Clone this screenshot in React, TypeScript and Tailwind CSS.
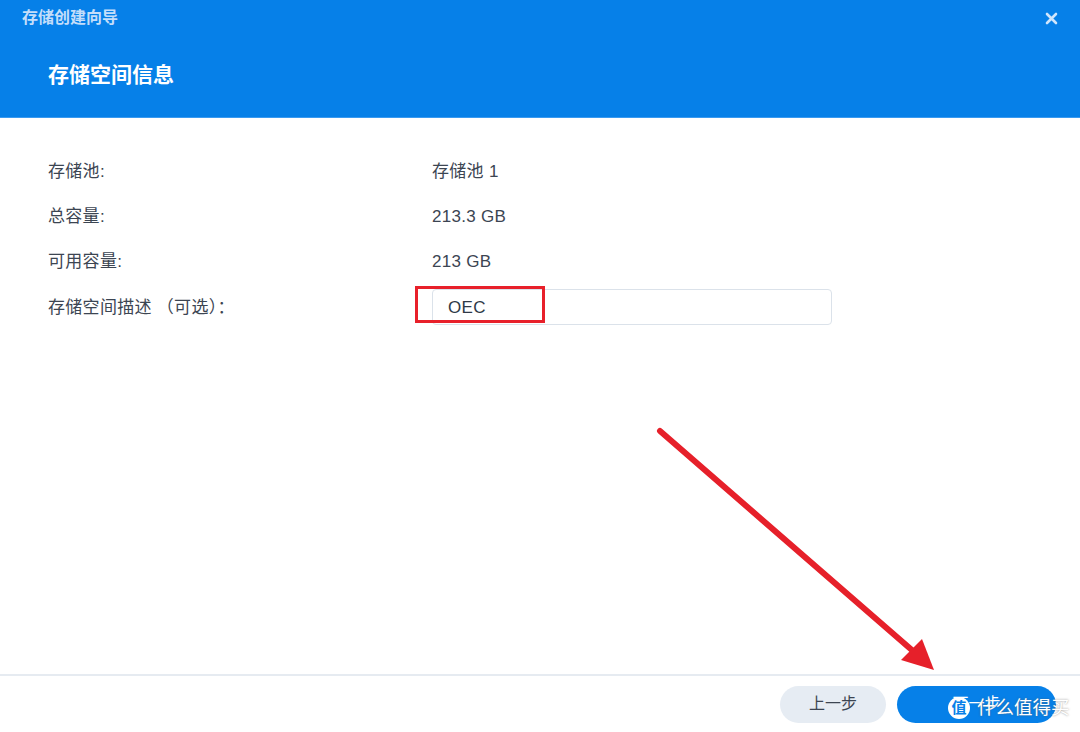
const font = { fontFamily: '"Liberation Sans", "Noto Sans CJK SC", sans-serif' };

const rows = [
  { label: "存储池:", value: "存储池 1" },
  { label: "总容量:", value: "213.3 GB" },
  { label: "可用容量:", value: "213 GB" },
];

export default function App() {
  return (
    <div className="relative w-[1080px] h-[732px] bg-white flex flex-col overflow-hidden" style={font}>
      {/* header */}
      <div className="h-[118px] bg-[#0680e8] flex flex-col border-b border-[#3a9af0]">
        <div className="flex items-center justify-between h-[36px] pl-[22px] pr-[22px]">
          <span className="text-[16px] font-bold text-[#c4defa]">存储创建向导</span>
          <svg width="13" height="13" viewBox="0 0 13 13">
            <path d="M2 2 L11 11 M11 2 L2 11" stroke="#cfe5fc" strokeWidth="2.6" strokeLinecap="round" />
          </svg>
        </div>
        <div className="pl-[48px] pt-[24px] text-[21px] leading-[30px] font-bold text-white">存储空间信息</div>
      </div>

      {/* body */}
      <div className="flex-1 pt-[31px] px-[48px]">
        {rows.map((r) => (
          <div key={r.label} className="flex items-center h-[45.3px] text-[17px] tracking-[0.3px] text-[#3c4552]">
            <div className="w-[384px]">{r.label}</div>
            <div>{r.value}</div>
          </div>
        ))}
        <div className="flex items-center h-[45px] text-[17px] tracking-[0.3px] text-[#3c4552]">
          <div className="w-[384px]">存储空间描述 （可选）：</div>
          <div className="relative">
            <div className="w-[400px] h-[36px] border border-[#dbe2ea] rounded-[4px] flex items-center pl-[15px] text-[17px] text-[#2f3947]">
              OEC
            </div>
            <div className="absolute left-[-17px] top-[-3px] w-[130px] h-[37px] border-[3px] border-[#e8202a]"></div>
          </div>
        </div>
      </div>

      {/* footer */}
      <div className="h-[58px] border-t-2 border-[#e6ebf1] flex items-center justify-end gap-[11px] pr-[24px]">
        <button className="w-[106px] h-[37px] rounded-full bg-[#e6ecf3] text-[16px] text-[#3c4552]">上一步</button>
        <button className="w-[159px] h-[37px] rounded-full bg-[#0680e8] text-[16px] text-white">下一步</button>
      </div>

      {/* watermark */}
      <div className="absolute left-[948px] top-[694px] flex items-center">
        <div className="w-[22px] h-[22px] rounded-full bg-white flex items-center justify-center text-[15px] font-bold text-[#0680e8]">值</div>
        <span className="ml-[7px] text-[18.5px] text-white [text-shadow:0_0_2px_rgba(90,90,90,0.7)]">什么值得买</span>
      </div>

      {/* red arrow */}
      <svg className="absolute left-0 top-0 pointer-events-none" width="1080" height="732">
        <line x1="660" y1="431" x2="913" y2="651" stroke="#e6202a" strokeWidth="6" strokeLinecap="round" />
        <polygon points="934,670 901,660 922,639" fill="#e6202a" />
      </svg>
    </div>
  );
}
